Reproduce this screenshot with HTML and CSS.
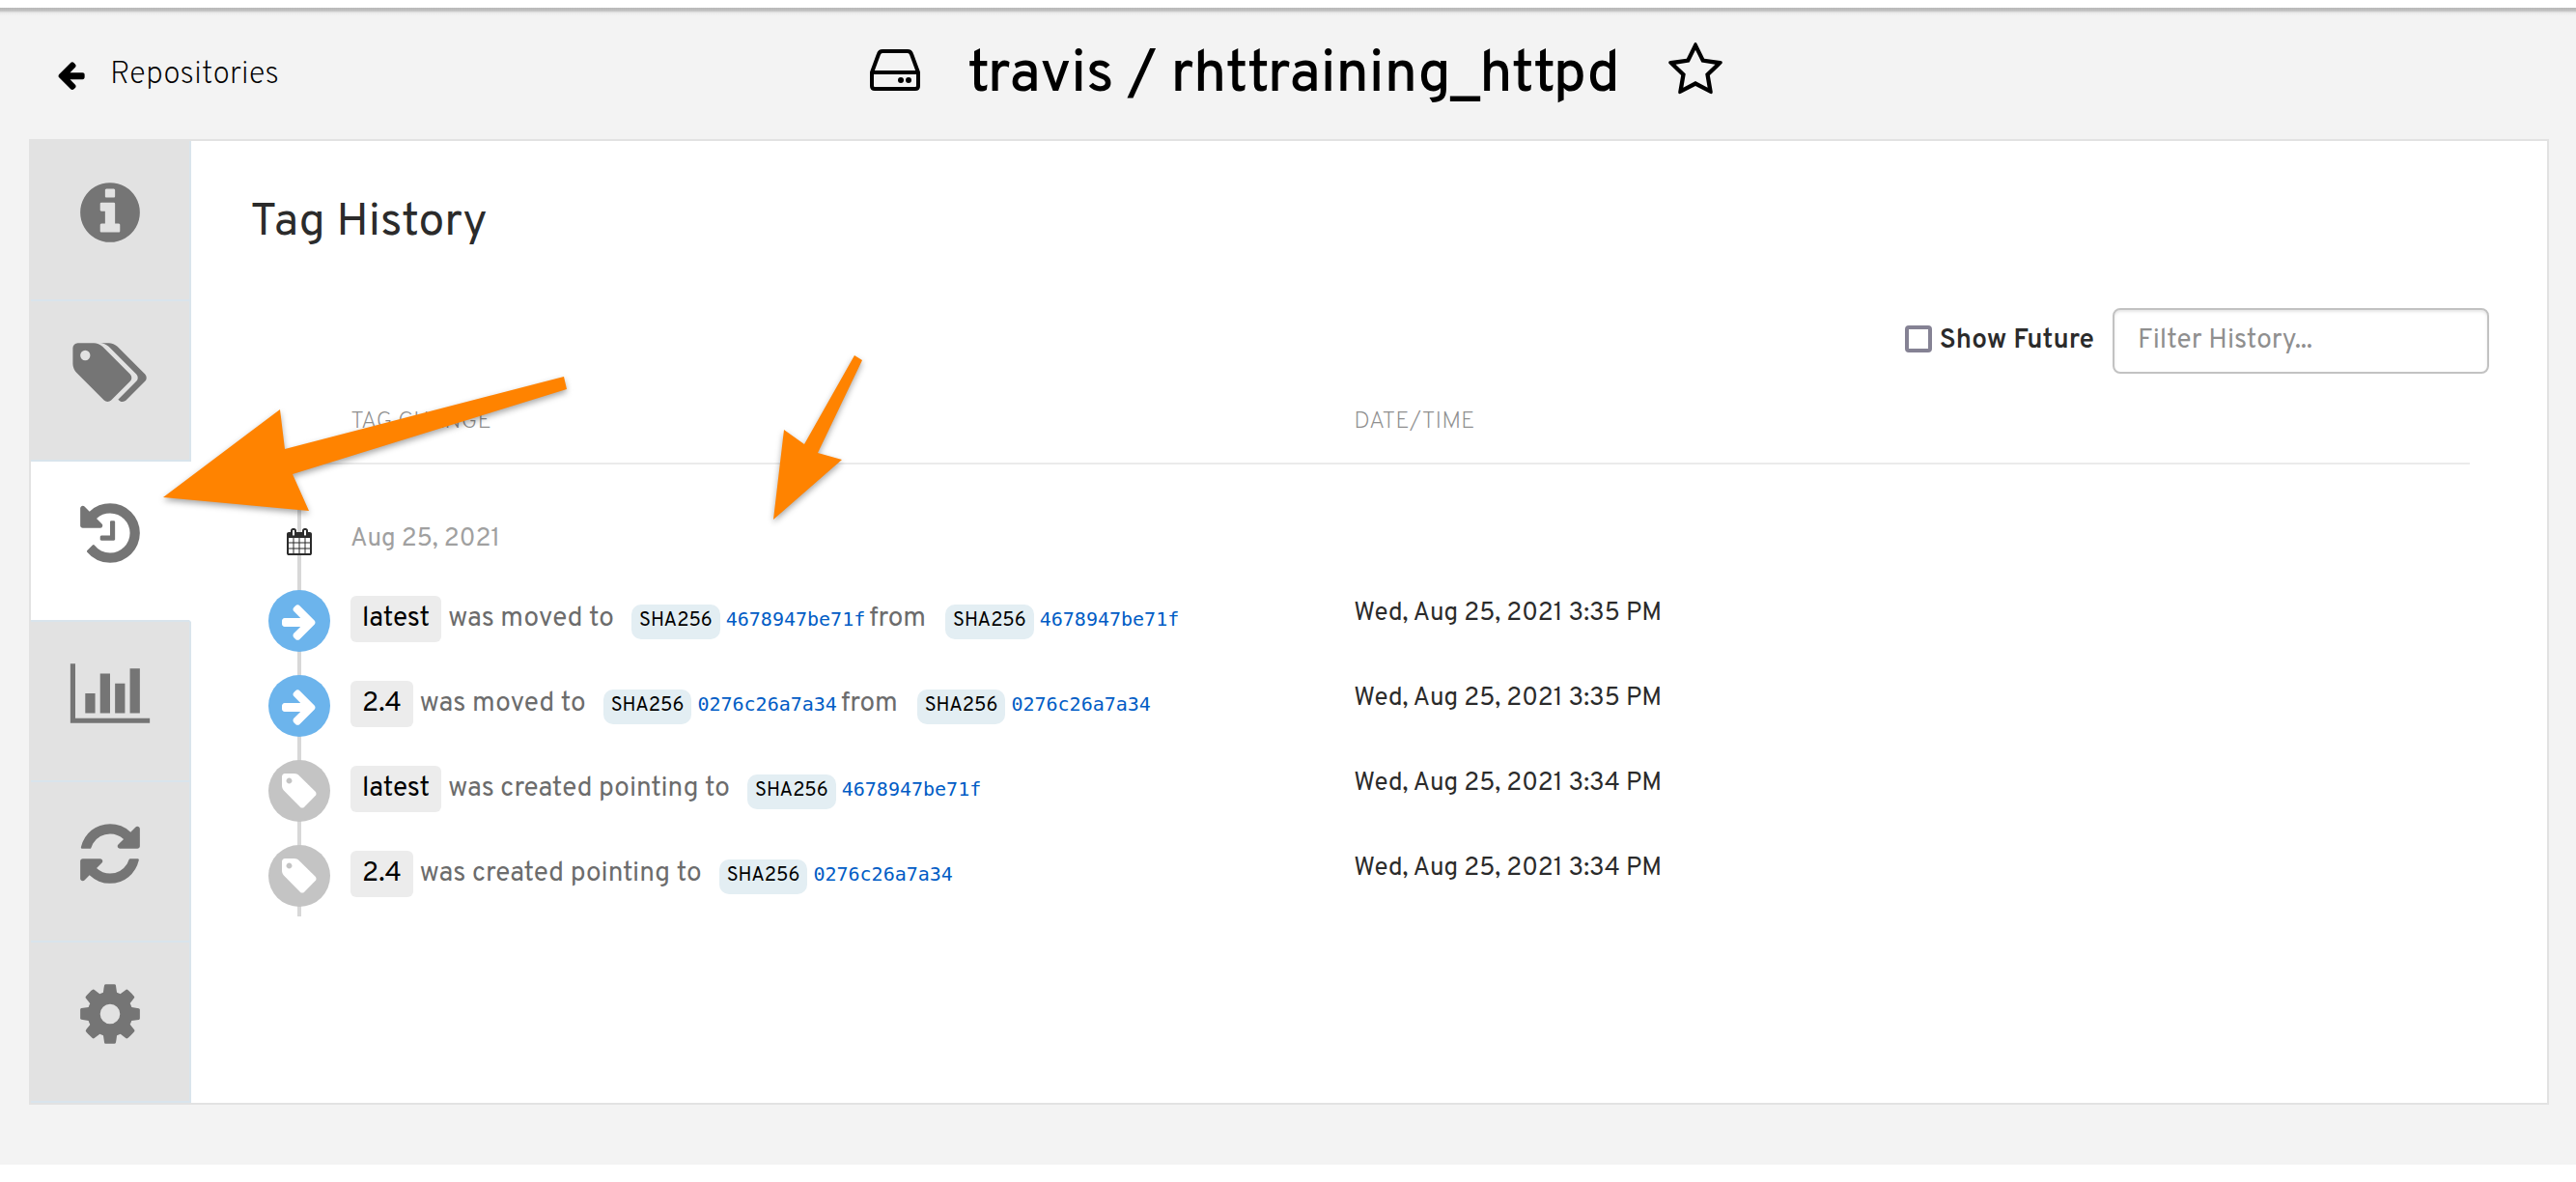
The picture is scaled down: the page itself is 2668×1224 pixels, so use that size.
FILE: index.html
```html
<!DOCTYPE html>
<html lang="en">
<head>
<meta charset="utf-8">
<title>travis / rhttraining_httpd - Tag History</title>
<link rel="stylesheet" href="styles.css">
</head>
<body>
<svg class="sprite" aria-hidden="true">
  <symbol id="i-arrow-right" viewBox="0 0 1792 1792"><path d="M1600 960q0 54-37 91l-651 651q-39 37-91 37-51 0-90-37l-75-75q-38-38-38-91t38-91l293-293h-704q-52 0-84.5-37.5t-32.5-90.5v-128q0-53 32.5-90.5t84.5-37.5h704l-293-294q-38-36-38-90t38-90l75-75q38-38 90-38 53 0 91 38l651 651q37 35 37 90z"/></symbol>
  <symbol id="i-tag" viewBox="0 0 1792 1792"><path d="M576 448q0-53-37.5-90.5t-90.5-37.5-90.5 37.5-37.5 90.5 37.5 90.5 90.5 37.5 90.5-37.5 37.5-90.5zm1067 576q0 53-37 90l-491 492q-39 37-91 37-53 0-90-37l-715-716q-38-37-64.5-101t-26.5-117v-416q0-52 38-90t90-38h416q53 0 117 26.5t102 64.5l715 714q37 39 37 91z"/></symbol>
</svg>

<div class="topbar"></div>
<main class="page">
  <header class="page-header">
    <a class="back" href="#">
      <svg class="back-icon" viewBox="0 0 1792 1792" aria-hidden="true"><path d="M1664 896v128q0 53-32.5 90.5t-84.5 37.5h-704l293 294q38 36 38 90t-38 90l-75 76q-37 37-90 37-52 0-91-37l-651-652q-37-37-37-90 0-52 37-91l651-650q38-38 91-38 52 0 90 38l75 74q38 38 38 91t-38 91l-293 293h704q52 0 84.5 37.5t32.5 90.5z"/></svg>
      <span>Repositories</span>
    </a>
    <div class="repo">
      <svg class="repo-icon" viewBox="0 0 54 44" aria-hidden="true"><path class="outline" d="M3 24L10 5Q11 2 14 2H40Q43 2 44 5L51 24V38Q51 41 48 41H6Q3 41 3 38ZM3 24H51"/><circle cx="33" cy="32" r="3"/><circle cx="41" cy="32" r="3"/></svg>
      <h1 class="repo-name">travis / rhttraining_httpd</h1>
      <button class="star" type="button" aria-label="Star repository">
        <svg viewBox="0 0 1792 1792" aria-hidden="true"><path d="M1201 1004l306-297-422-62-189-382-189 382-422 62 306 297-73 421 378-199 377 199zm527-357q0 22-26 48l-363 354 86 500q1 7 1 20 0 50-41 50-19 0-40-12l-449-236-449 236q-22 12-40 12-21 0-31.5-14.5t-10.5-35.5q0-6 2-20l86-500-364-354q-25-27-25-48 0-37 56-46l502-73 225-455q19-41 49-41t49 41l225 455 502 73q56 9 56 46z"/></svg>
      </button>
    </div>
  </header>

  <div class="panel">
    <nav class="tabs" aria-label="Repository sections">
      <a class="tab" href="#" aria-label="Information"><svg viewBox="0 0 1792 1792"><path d="M1152 1376v-160q0-14-9-23t-23-9h-96v-512q0-14-9-23t-23-9h-320q-14 0-23 9t-9 23v160q0 14 9 23t23 9h96v320h-96q-14 0-23 9t-9 23v160q0 14 9 23t23 9h448q14 0 23-9t9-23zm-128-896v-160q0-14-9-23t-23-9h-192q-14 0-23 9t-9 23v160q0 14 9 23t23 9h192q14 0 23-9t9-23zm640 416q0 209-103 385.5t-279.5 279.5-385.5 103-385.5-103-279.5-279.5-103-385.5 103-385.5 279.5-279.5 385.5-103 385.5 103 279.5 279.5 103 385.5z"/></svg></a>
      <a class="tab" href="#" aria-label="Tags"><svg viewBox="0 0 1792 1792"><path d="M384 448q0-53-37.5-90.5t-90.5-37.5-90.5 37.5-37.5 90.5 37.5 90.5 90.5 37.5 90.5-37.5 37.5-90.5zm1067 576q0 53-37 90l-491 492q-39 37-91 37-53 0-90-37l-715-716q-38-37-64.5-101t-26.5-117v-416q0-52 38-90t90-38h416q53 0 117 26.5t102 64.5l715 714q37 39 37 91zm384 0q0 53-37 90l-491 492q-39 37-91 37-36 0-59-14t-53-45l470-470q37-37 37-90 0-52-37-91l-715-714q-38-38-102-64.5t-117-26.5h224q53 0 117 26.5t102 64.5l715 714q37 39 37 91z"/></svg></a>
      <a class="tab tab-active" href="#" aria-label="Tag History" aria-current="page"><svg viewBox="0 0 1792 1792"><path d="M1664 896q0 156-61 298t-164 245-245 164-298 61q-172 0-327-72.5t-264-204.5q-7-10-6.5-22.5t8.5-20.5l137-138q10-9 25-9 16 2 23 12 73 95 179 147t225 52q104 0 198.5-40.5t163.5-109.5 109.5-163.5 40.5-198.5-40.5-198.5-109.5-163.5-163.5-109.5-198.5-40.5q-98 0-188 35.5t-160 101.5l137 138q31 30 14 69-17 40-59 40h-448q-26 0-45-19t-19-45v-448q0-42 40-59 39-17 69 14l130 129q107-101 244.5-156.5t284.5-55.5q156 0 298 61t245 164 164 245 61 298zm-640-288v448q0 14-9 23t-23 9h-320q-14 0-23-9t-9-23v-64q0-14 9-23t23-9h224v-352q0-14 9-23t23-9h64q14 0 23 9t9 23z"/></svg></a>
      <a class="tab" href="#" aria-label="Usage Logs"><svg viewBox="128 0 1792 1792"><path d="M640 896v512h-256v-512h256zm384-512v1024h-256v-1024h256zm1024 1152v128h-2048v-1536h128v1408h1920zm-640-896v768h-256v-768h256zm384-384v1152h-256v-1152h256z"/></svg></a>
      <a class="tab" href="#" aria-label="Mirroring"><svg viewBox="0 0 1792 1792"><path d="M1639 1056q0 5-1 7-64 268-268 434.5t-478 166.5q-146 0-282.5-55t-243.5-157l-129 129q-19 19-45 19t-45-19-19-45v-448q0-26 19-45t45-19h448q26 0 45 19t19 45-19 45l-137 137q71 66 161 102t187 36q134 0 250-65t186-179q11-17 53-117 8-23 30-23h192q13 0 22.5 9.5t9.5 22.5zm25-800v448q0 26-19 45t-45 19h-448q-26 0-45-19t-19-45 19-45l138-138q-148-137-349-137-134 0-250 65t-186 179q-11 17-53 117-8 23-30 23h-199q-13 0-22.5-9.5t-9.5-22.5v-7q65-268 270-434.5t480-166.5q146 0 284 55.5t245 156.5l130-129q19-19 45-19t45 19 19 45z"/></svg></a>
      <a class="tab" href="#" aria-label="Settings"><svg viewBox="0 0 1792 1792"><path d="M1152 896q0-106-75-181t-181-75-181 75-75 181 75 181 181 75 181-75 75-181zm512-109v222q0 12-8 23t-20 13l-185 28q-19 54-39 91 35 50 107 138 10 12 10 25t-9 23q-27 37-99 108t-94 71q-12 0-26-9l-138-108q-44 23-91 38-16 136-29 186-7 28-36 28h-222q-14 0-24.5-8.5t-11.5-21.5l-28-184q-49-16-90-37l-141 107q-10 9-25 9-14 0-25-11-126-114-165-168-7-10-7-23 0-12 8-23 15-21 51-66.5t54-70.5q-27-50-41-99l-183-27q-13-2-21-12.5t-8-23.5v-222q0-12 8-23t19-13l186-28q14-46 39-92-40-57-107-138-10-12-10-24 0-10 9-23 26-36 98.5-107.5t94.5-71.5q13 0 26 10l138 107q44-23 91-38 16-136 29-186 7-28 36-28h222q14 0 24.5 8.5t11.5 21.5l28 184q49 16 90 37l142-107q9-9 24-9 13 0 25 10 129 119 165 170 7 8 7 22 0 12-8 23-15 21-51 66.5t-54 70.5q26 50 41 98l183 28q13 2 21 12.5t8 23.5z"/></svg></a>
    </nav>

    <section class="content">
      <h2 class="title">Tag History</h2>
      <form class="filters">
        <label class="future"><input class="check" type="checkbox"><span>Show Future</span></label>
        <input class="filter" type="text" placeholder="Filter History..." aria-label="Filter History">
      </form>
      <table class="history">
        <colgroup><col class="col-icon"><col class="col-change"><col></colgroup>
        <thead>
          <tr><th></th><th scope="col">TAG CHANGE</th><th scope="col">DATE/TIME</th></tr>
        </thead>
        <tbody>
          <tr class="day">
            <td class="rail"><svg class="calendar" viewBox="0 0 1792 1792" aria-hidden="true"><path class="paper" d="M128 400h1536v1300H128z"/><path d="M192 1664h288v-288h-288v288zm352 0h320v-288h-320v288zm-352-352h288v-320h-288v320zm352 0h320v-320h-320v320zm-352-384h288v-288h-288v288zm736 736h320v-288h-320v288zm-384-736h320v-288h-320v288zm768 736h288v-288h-288v288zm-384-352h320v-320h-320v320zm-352-864v-288q0-13-9.5-22.5t-22.5-9.5h-64q-13 0-22.5 9.5t-9.5 22.5v288q0 13 9.5 22.5t22.5 9.5h64q13 0 22.5-9.5t9.5-22.5zm736 864h288v-320h-288v320zm-384-384h320v-288h-320v288zm384 0h288v-288h-288v288zm32-480v-288q0-13-9.5-22.5t-22.5-9.5h-64q-13 0-22.5 9.5t-9.5 22.5v288q0 13 9.5 22.5t22.5 9.5h64q13 0 22.5-9.5t9.5-22.5zm384-64v1280q0 52-38 90t-90 38h-1408q-52 0-90-38t-38-90v-1280q0-52 38-90t90-38h128v-96q0-66 47-113t113-47h64q66 0 113 47t47 113v96h384v-96q0-66 47-113t113-47h64q66 0 113 47t47 113v96h128q52 0 90 38t38 90z"/></svg></td>
            <td colspan="2" class="day-name">Aug 25, 2021</td>
          </tr>
          <tr class="entry">
            <td class="rail"><span class="dot dot-move"><svg><use href="#i-arrow-right"/></svg></span></td>
            <td><div class="change"><span class="tag">latest</span><span class="verb">was moved to</span><span class="sha">SHA256</span><a class="hash" href="#">4678947be71f</a><span class="from">from</span><span class="sha">SHA256</span><a class="hash" href="#">4678947be71f</a></div></td>
            <td class="time">Wed, Aug 25, 2021 3:35 PM</td>
          </tr>
          <tr class="entry">
            <td class="rail"><span class="dot dot-move"><svg><use href="#i-arrow-right"/></svg></span></td>
            <td><div class="change"><span class="tag">2.4</span><span class="verb">was moved to</span><span class="sha">SHA256</span><a class="hash" href="#">0276c26a7a34</a><span class="from">from</span><span class="sha">SHA256</span><a class="hash" href="#">0276c26a7a34</a></div></td>
            <td class="time">Wed, Aug 25, 2021 3:35 PM</td>
          </tr>
          <tr class="entry">
            <td class="rail"><span class="dot"><svg><use href="#i-tag"/></svg></span></td>
            <td><div class="change"><span class="tag">latest</span><span class="verb">was created pointing to</span><span class="sha">SHA256</span><a class="hash" href="#">4678947be71f</a></div></td>
            <td class="time">Wed, Aug 25, 2021 3:34 PM</td>
          </tr>
          <tr class="entry">
            <td class="rail"><span class="dot"><svg><use href="#i-tag"/></svg></span></td>
            <td><div class="change"><span class="tag">2.4</span><span class="verb">was created pointing to</span><span class="sha">SHA256</span><a class="hash" href="#">0276c26a7a34</a></div></td>
            <td class="time">Wed, Aug 25, 2021 3:34 PM</td>
          </tr>
        </tbody>
      </table>
    </section>
  </div>
</main>

<svg class="callout callout-tab" viewBox="0 0 420 141" aria-hidden="true"><path d="M1 127L122 36L127 77L416 2L419 15L135 103L152 141Z"/></svg>
<svg class="callout callout-row" viewBox="0 0 93 171" aria-hidden="true"><path d="M1 170L12 77L33 92L85 0L93 5L47 101L72 108Z"/></svg>
</body>
</html>
```
FILE: styles.css
```css
* { box-sizing: border-box; }

body {
  margin: 0;
  min-height: 100vh;
  position: relative;
  background: #fff;
  color: #2b2b2b;
  font-family: Overpass, Roboto, "Liberation Sans", sans-serif;
  font-size: 28px;
}

a { color: inherit; text-decoration: none; }
svg { display: block; fill: currentColor; overflow: visible; }
.sprite { position: absolute; width: 0; height: 0; }

.topbar { height: 8px; background: #fff; }

.page {
  padding: 0 28px 62px 30px;
  background: linear-gradient(#b8b8b8, #c0c0c0 3px, #e8e8e8 5px, #f3f3f3 8px);
}

/* Header */
.page-header {
  display: grid;
  grid-template-columns: 1fr auto 1fr;
  height: 136px;
  color: #000;
}
.back {
  display: flex;
  align-items: center;
  justify-self: start;
  gap: 24px;
  height: 136px;
  padding: 2px 0 0 27px;
  font-size: 32px;
  font-weight: 200;
}
.back span { padding-top: 2px; line-height: 40px; }
.back-icon { width: 33px; height: 33px; }
.repo {
  display: flex;
  align-items: center;
  gap: 48px;
  padding: 0 0 6px 16px;
}
.repo-icon { width: 54px; height: 44px; }
.outline {
  fill: none;
  stroke: currentColor;
  stroke-width: 4;
  stroke-linejoin: round;
}
.repo-name {
  margin: 0;
  padding-top: 12px;
  font-size: 60px;
  font-weight: 500;
  line-height: 72px;
}
.star {
  padding: 0;
  border: 0;
  background: none;
  color: #000;
}
.star svg { width: 60px; height: 60px; }

/* Panel */
.panel {
  display: flex;
  border: 2px solid #e2e2e2;
  background: #fff;
}
.tabs { flex: none; width: 166px; }
.tab {
  display: flex;
  align-items: flex-start;
  justify-content: center;
  height: 166px;
  padding-top: 38px;
  border-right: 2px solid #d9e4ec;
  border-bottom: 2px solid #d9e4ec;
  background: #e2e2e2;
  color: #757575;
}
.tab svg { width: 72px; height: 72px; }
.tab-active { border-right-color: #fff; background: #fff; }

.content { flex: 1; padding: 57px 60px 0 61px; }
.title {
  margin: 0;
  font-size: 48px;
  font-weight: 400;
  line-height: 56px;
}

.filters {
  display: flex;
  align-items: center;
  justify-content: flex-end;
  gap: 19px;
  margin-top: 60px;
}
.future {
  display: flex;
  align-items: center;
  gap: 8px;
  padding-bottom: 4px;
  font-weight: 600;
}
.future span { padding-top: 4px; }
.check {
  appearance: none;
  width: 28px;
  height: 28px;
  margin: 0;
  border: 4px solid #858294;
  border-radius: 4px;
  background: #fff;
}
.filter {
  width: 390px;
  height: 68px;
  padding: 0 24px;
  border: 2px solid #c2c2c2;
  border-radius: 8px;
  background: #fff;
  box-shadow: inset 0 2px 3px rgba(0, 0, 0, .1);
  font: inherit;
}
.filter::placeholder { color: #8f8f8f; opacity: 1; }

/* History */
.history {
  width: calc(100% - 20px);
  border-collapse: collapse;
  table-layout: fixed;
}
.col-icon { width: 102px; }
.col-change { width: 45.2%; }
.history th {
  height: 93px;
  padding: 34px 2px 0;
  border-bottom: 2px solid #ebebeb;
  color: #8f8f8f;
  font-size: 25px;
  font-weight: 200;
  line-height: 32px;
  text-align: left;
  vertical-align: top;
}
.history td { padding: 14px 2px 10px; vertical-align: top; }

.history .rail { position: relative; padding-left: 0; padding-right: 0; }
.rail::before {
  content: "";
  position: absolute;
  top: 0;
  bottom: 0;
  left: 49px;
  width: 4px;
  background: #d8d8d8;
}
.history .day td { height: 117px; padding-top: 66px; }
.day .rail::before { top: 36px; }
.history .day .day-name {
  padding-top: 62px;
  color: #a0a0a0;
  font-size: 26px;
  line-height: 32px;
}
.calendar { position: relative; width: 28px; height: 28px; margin: 0 auto; }
.paper { fill: #fff; }

.dot {
  position: relative;
  display: flex;
  align-items: center;
  justify-content: center;
  width: 64px;
  height: 64px;
  margin: 0 auto;
  border-radius: 50%;
  background: #c4c4c4;
  color: #fff;
}
.dot-move { background: #6cb4ec; }
.dot svg { width: 42px; height: 42px; }

.change {
  display: flex;
  align-items: baseline;
  padding-top: 6px;
  color: #6c6c6c;
  white-space: nowrap;
}
.tag {
  padding: 0 12px;
  border-radius: 6px;
  background: #ececec;
  color: #000;
  line-height: 48px;
}
.verb { margin: 0 18px 0 7px; }
.sha {
  padding: 0 8px 2px;
  border-radius: 10px;
  background: #e3eef3;
  color: #000;
  font-size: 20px;
  line-height: 34px;
}
.hash {
  margin-left: 6px;
  color: #005cc5;
  font-family: "DejaVu Sans Mono", monospace;
  font-size: 20px;
}
.from { margin: 0 20px 0 4px; }
.history .time { padding-top: 23px; font-size: 26px; line-height: 32px; }

/* Annotation arrows lying over the page */
.callout {
  position: absolute;
  fill: #ff8300;
  filter: drop-shadow(0 3px 3px rgba(0, 0, 0, .35));
}
.callout-tab { left: 168px; top: 388px; width: 420px; height: 141px; }
.callout-row { left: 800px; top: 368px; width: 93px; height: 171px; }
```
